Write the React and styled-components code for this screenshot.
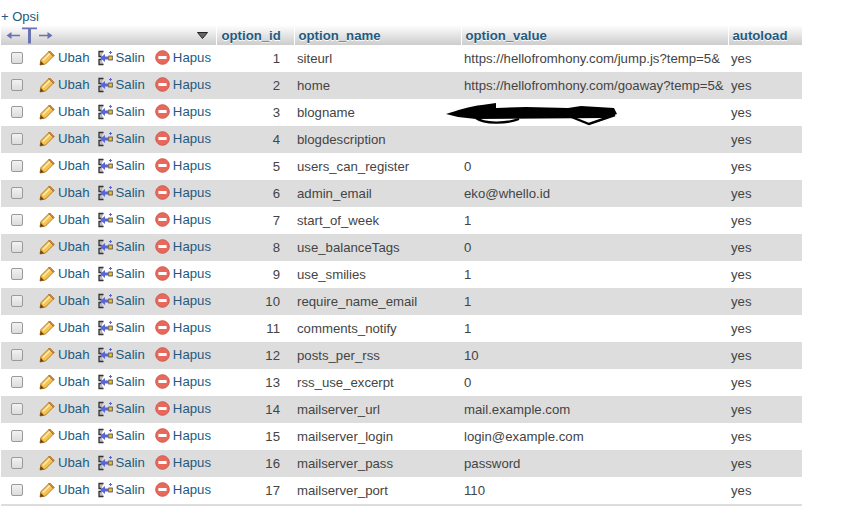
import React from "react";
import styled, { createGlobalStyle } from "styled-components";

const GlobalStyle = createGlobalStyle`
  html, body {
    margin: 0;
    background: #fff;
    font-family: "Liberation Sans", Arial, sans-serif;
    font-size: 13.2px;
    color: #444;
  }
`;

const Page = styled.div`
  width: 845px;
  height: 506px;
  overflow: hidden;
  padding: 9px 0 0 1px;
  box-sizing: border-box;
`;

const Options = styled.a`
  display: block;
  height: 16px;
  line-height: 16px;
  font-size: 13px;
  color: #235a81;
`;

const Table = styled.table`
  border-collapse: collapse;
  table-layout: fixed;
  width: 801px;
  border-bottom: 2px solid #ddd;
`;

const HeadRow = styled.tr`
  height: 20px;
  background: linear-gradient(#fff, #ccc);
`;

const HeadCell = styled.th`
  padding: 0 0 0 ${(p) => p.$pad ?? 4}px;
  text-align: left;
  font-size: 13.2px;
  font-weight: bold;
  color: #235a81;
  text-shadow: 0 1px 0 #fff;
  border-left: ${(p) => (p.$first ? "0" : "1px solid #fff")};
  white-space: nowrap;
  overflow: hidden;
`;

const ActionHead = styled.div`
  display: flex;
  align-items: center;
  justify-content: space-between;
  padding: 0 8px 0 5px;
  height: 20px;
`;

const Row = styled.tr`
  height: 27px;
  background: ${(p) => (p.$even ? "#ddd" : "#fff")};
`;

const Cell = styled.td`
  padding: 0 ${(p) => (p.$right ? 14 : 0)}px 0 ${(p) => p.$pad ?? 3}px;
  text-align: ${(p) => (p.$right ? "right" : "left")};
  white-space: nowrap;
  overflow: ${(p) => (p.$open ? "visible" : "hidden")};
  color: #444;
  line-height: 27px;
`;

const Actions = styled.div`
  display: flex;
  align-items: center;
  height: 25px;
  margin-top: -2px;
  padding-left: 10px;
`;

const Check = styled.span`
  width: 10px;
  height: 10px;
  border: 1px solid #9a9a9a;
  border-radius: 2px;
  background: linear-gradient(#f2f2f2, #dcdcdc);
  margin-right: 16px;
  flex: none;
`;

const ActionLink = styled.a`
  display: inline-flex;
  align-items: center;
  gap: 3px;
  color: #235a81;
  margin-right: ${(p) => p.$gap}px;
  line-height: 16px;
`;

const ValueWrap = styled.div`
  position: relative;
  height: 27px;
`;

const Scribble = styled.svg`
  position: absolute;
  left: -18px;
  top: 0;
  width: 172px;
  height: 27px;
`;

const Pencil = () => (
  <svg width="16" height="16" viewBox="0 0 16 16">
    <path d="M1 15 L2 9.5 L10.5 1 L15 5.5 L6.5 14 Z" fill="#f5c350" stroke="#b07a24" strokeWidth="1" strokeLinejoin="round" />
    <path d="M4 10.5 L11.5 3" stroke="#fdeeb5" strokeWidth="1.4" />
    <path d="M9.8 1.8 L14.2 6.2 L15 5.5 L10.5 1 Z" fill="#e79a6d" stroke="#a3612c" strokeWidth=".8" />
    <path d="M1 15 L1.8 11 L5 14.2 Z" fill="#6b421a" />
  </svg>
);

const CopyIcon = () => (
  <svg width="15" height="16" viewBox="0 0 15 16">
    <path d="M5.5 1.5H1V6.5H3.5M3.5 9.5H1V14.5H5.5" fill="#bbb" stroke="#333" strokeWidth="1.3" />
    <path d="M2 8 L7 4 V6.5 H10 V9.5 H7 V12 Z" fill="#5a63d8" />
    <rect x="10.7" y="6" width="3.6" height="4" fill="#f0c22e" stroke="#444" strokeWidth=".8" />
    <path d="M12.5 1 V4 M11 2.5 H14" stroke="#5a63d8" strokeWidth="1" />
  </svg>
);

const DeleteIcon = () => (
  <svg width="15" height="15" viewBox="0 0 15 15">
    <circle cx="7.5" cy="7.5" r="6.8" fill="#e8685c" stroke="#d05a4e" strokeWidth="1" />
    <rect x="3.4" y="6" width="8.2" height="3" rx=".6" fill="#fff" />
  </svg>
);

const ColumnArrows = () => (
  <svg width="47" height="18" viewBox="0 0 47 18">
    <path d="M5 9.5H14M33 9.5H42" stroke="#6a72b4" strokeWidth="1.4" fill="none" />
    <path d="M0.5 9.5L5.5 6V13Z M46.5 9.5L41.5 6V13Z" fill="#6a72b4" />
    <path d="M16 1.5H31V3.2H25V17.5H22V3.2H16Z" fill="#6a72b4" />
  </svg>
);

const SortMark = () => (
  <svg width="11" height="7" viewBox="0 0 11 7">
    <path d="M0.5 0.5H10.5L5.5 6.5Z" fill="#666" stroke="#222" strokeWidth="1" />
  </svg>
);

const rows = [
  ["siteurl", "https://hellofromhony.com/jump.js?temp=5&"],
  ["home", "https://hellofromhony.com/goaway?temp=5&"],
  ["blogname", "", true],
  ["blogdescription", ""],
  ["users_can_register", "0"],
  ["admin_email", "eko@whello.id"],
  ["start_of_week", "1"],
  ["use_balanceTags", "0"],
  ["use_smilies", "1"],
  ["require_name_email", "1"],
  ["comments_notify", "1"],
  ["posts_per_rss", "10"],
  ["rss_use_excerpt", "0"],
  ["mailserver_url", "mail.example.com"],
  ["mailserver_login", "login@example.com"],
  ["mailserver_pass", "password"],
  ["mailserver_port", "110"],
];

export default function App() {
  return (
    <Page>
      <GlobalStyle />
      <Options>+ Opsi</Options>
      <Table>
        <colgroup>
          <col style={{ width: 215 }} />
          <col style={{ width: 78 }} />
          <col style={{ width: 167 }} />
          <col style={{ width: 267 }} />
          <col style={{ width: 74 }} />
        </colgroup>
        <thead>
          <HeadRow>
            <HeadCell $first $pad={0}>
              <ActionHead>
                <ColumnArrows />
                <SortMark />
              </ActionHead>
            </HeadCell>
            <HeadCell $pad={5}>option_id</HeadCell>
            <HeadCell>option_name</HeadCell>
            <HeadCell>option_value</HeadCell>
            <HeadCell>autoload</HeadCell>
          </HeadRow>
        </thead>
        <tbody>
          {rows.map(([name, value, hidden], i) => (
            <Row key={name} $even={i % 2 === 1}>
              <Cell $pad={0}>
                <Actions>
                  <Check />
                  <ActionLink $gap={8}>
                    <Pencil />
                    Ubah
                  </ActionLink>
                  <ActionLink $gap={10}>
                    <CopyIcon />
                    Salin
                  </ActionLink>
                  <ActionLink $gap={0}>
                    <DeleteIcon />
                    Hapus
                  </ActionLink>
                </Actions>
              </Cell>
              <Cell $right>{i + 1}</Cell>
              <Cell>{name}</Cell>
              <Cell $open={hidden}>
                {hidden ? (
                  <ValueWrap>
                    <Scribble viewBox="0 0 172 27">
                      <path
                        d="M0 15 C10 12 24 7 36 6 L50 4 L50 9 L80 8 L122 9 L135 7 L168 9 L171 15 L160 19 L30 20 L12 18 Z"
                        fill="#000"
                      />
                      <path
                        d="M30 19 C38 25 60 25 73 20 M123 17 L143 25 L169 16"
                        fill="none"
                        stroke="#000"
                        strokeWidth="2.4"
                      />
                    </Scribble>
                  </ValueWrap>
                ) : (
                  value
                )}
              </Cell>
              <Cell>yes</Cell>
            </Row>
          ))}
        </tbody>
      </Table>
    </Page>
  );
}
